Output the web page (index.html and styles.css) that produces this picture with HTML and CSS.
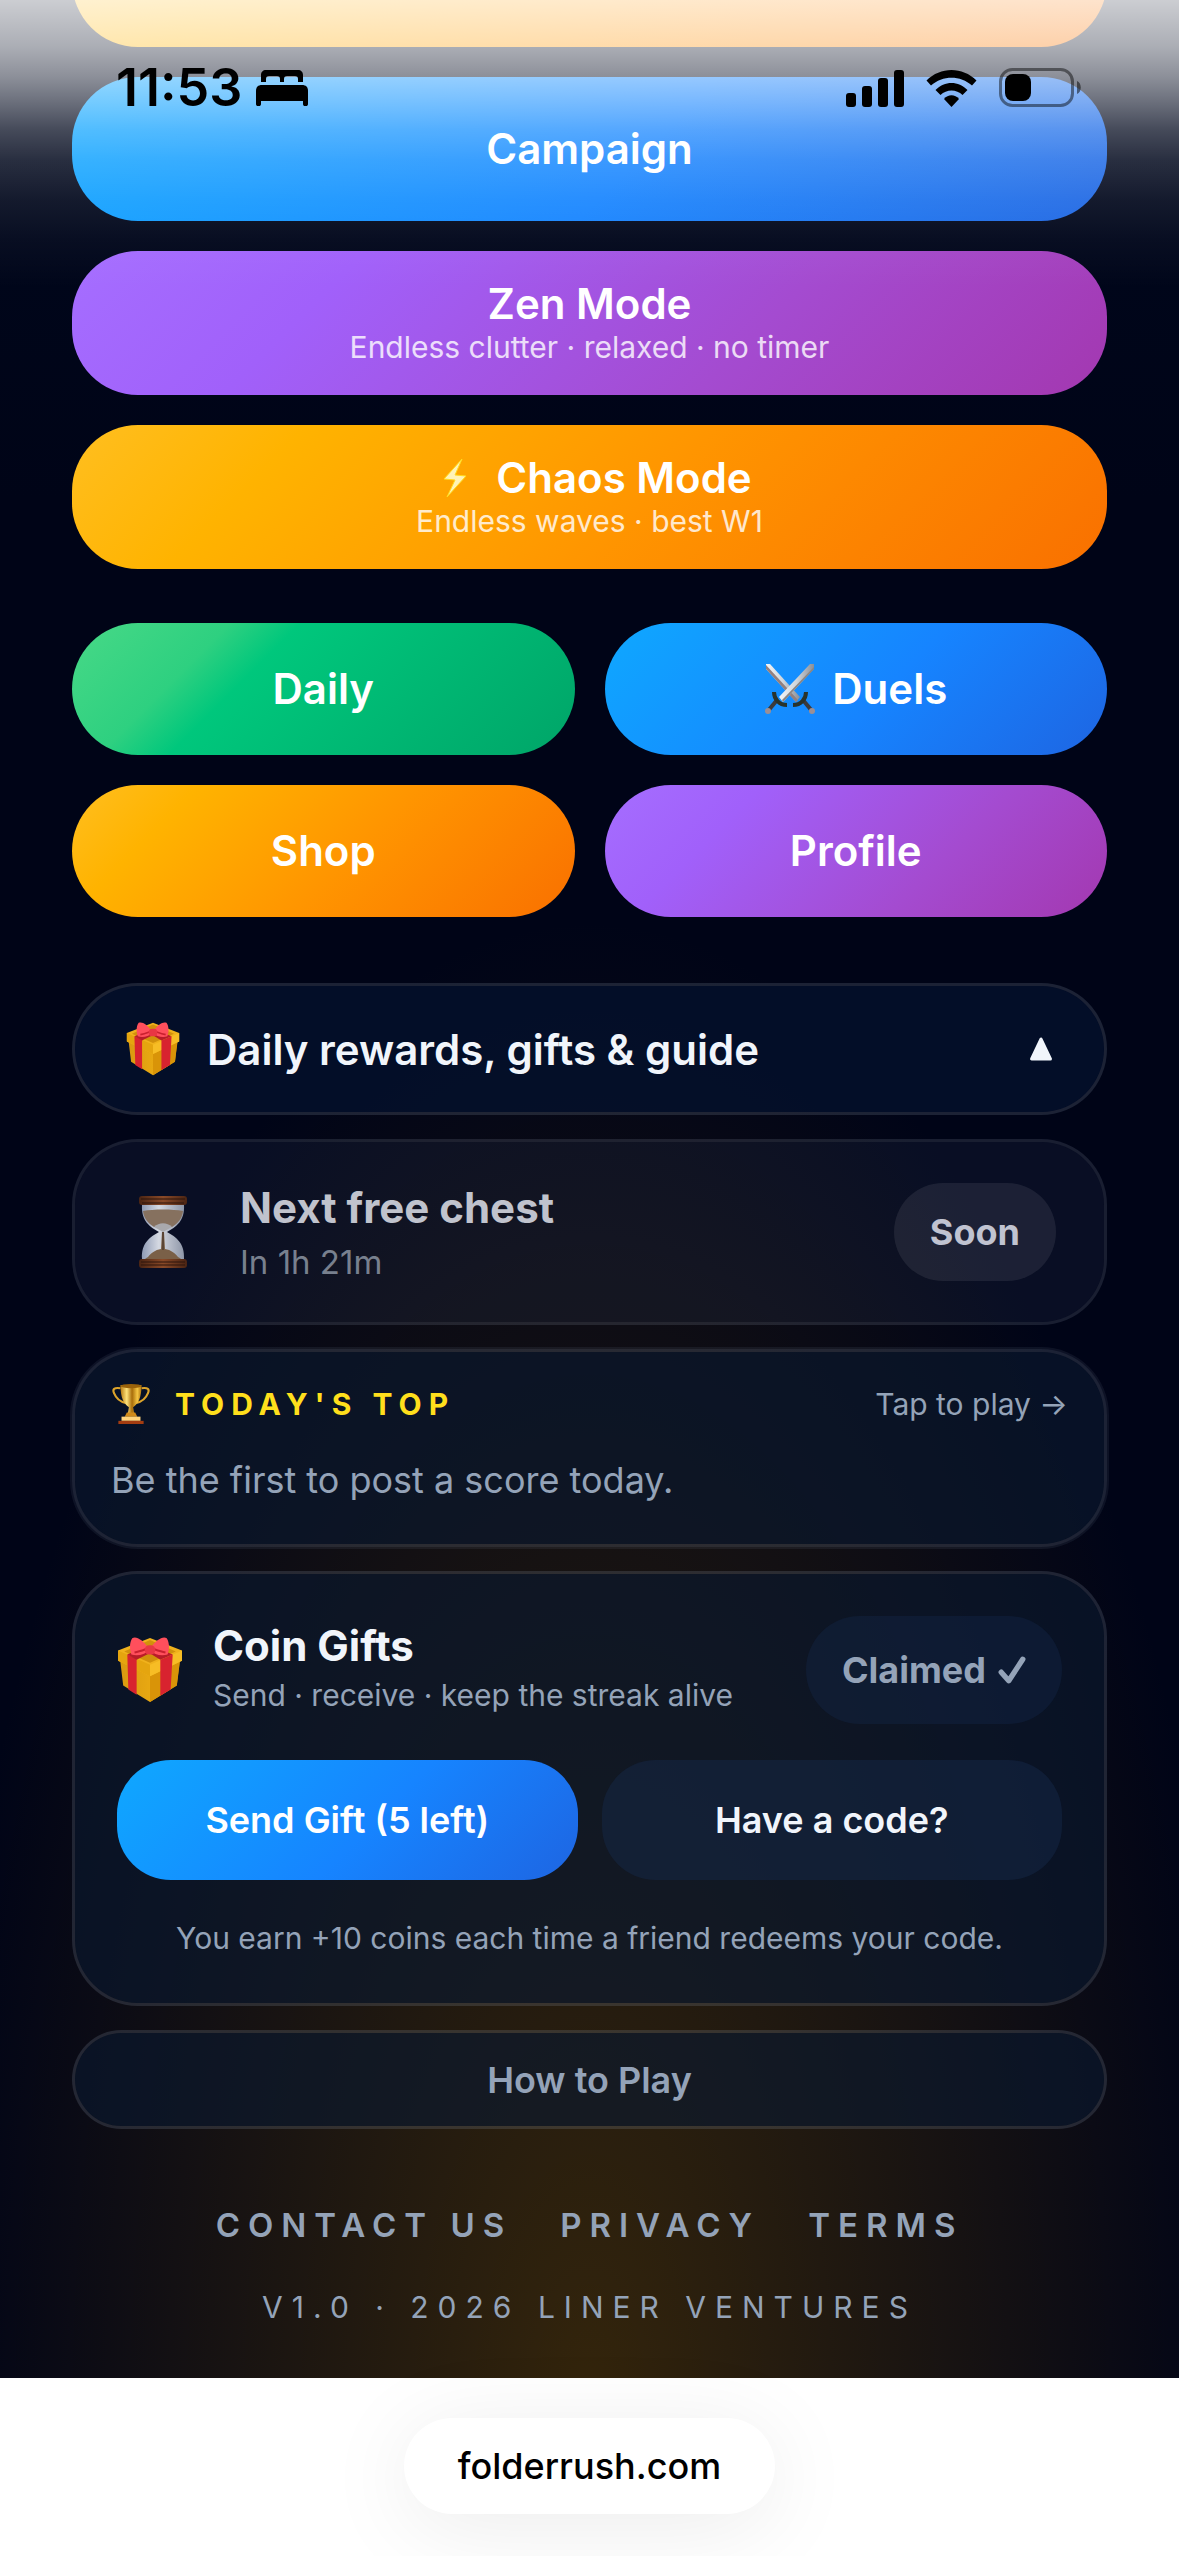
FILE: index.html
```
<!DOCTYPE html>
<html lang="en">
<head>
<meta charset="utf-8">
<meta name="viewport" content="width=device-width, initial-scale=1">
<title>Folder Rush</title>
<link rel="stylesheet" href="styles.css">
</head>
<body>
<svg class="defs" aria-hidden="true">
  <defs>
    <linearGradient id="gold" x1="0" x2="1"><stop offset="0" stop-color="#d99a10"/><stop offset=".5" stop-color="#e8a812"/><stop offset="1" stop-color="#c98a08"/></linearGradient>
    <linearGradient id="cup" x1="0" x2="1"><stop offset="0" stop-color="#b87a10"/><stop offset=".3" stop-color="#ffe27a"/><stop offset=".55" stop-color="#a86c0a"/><stop offset=".8" stop-color="#f5c542"/><stop offset="1" stop-color="#b07510"/></linearGradient>
    <linearGradient id="wood" x1="0" x2="1"><stop offset="0" stop-color="#4a2413"/><stop offset=".5" stop-color="#8a4a28"/><stop offset="1" stop-color="#4a2413"/></linearGradient>
    <linearGradient id="glass" x1="0" x2="1"><stop offset="0" stop-color="#8f9bb5"/><stop offset=".4" stop-color="#d5d9e2"/><stop offset="1" stop-color="#8e96a8"/></linearGradient>
    <linearGradient id="blade" x1="0" x2="1"><stop offset="0" stop-color="#f2f5f8"/><stop offset=".5" stop-color="#cfd6dd"/><stop offset="1" stop-color="#8a8f98"/></linearGradient>
    <symbol id="gift" viewBox="0 0 62 64">
      <path d="M2 22 31 36 60 22 57 47 31 63 5 47z" fill="url(#gold)"/>
      <path d="M31 36v27l26-16 3-23z" fill="#d99408"/>
      <path d="M0 13 31 1 62 13v10L31 38 0 23z" fill="#f0b21c"/>
      <path d="M0 13 31 27v11L0 23z" fill="#e5a50f"/>
      <path d="M62 13 31 27v11l31-15z" fill="#f7bd25"/>
      <path d="M31 3 56 14 31 25 6 14z" fill="#d2900c"/>
      <path d="M9 17l9 4v35l-8-5z" fill="#d8232f"/>
      <path d="M53 17l-12 5v35l10-6z" fill="#d8232f"/>
      <path d="M9 17l16-7 9 4-16 8zM53 17 36 10l-8 4 13 8z" fill="#b81c29"/>
      <path d="M30 11C24 3 18-1 14 1c-3 4-3 11-1 16 6 2 13 0 17-4zM31 11c6-8 12-12 16-10 3 4 3 11 1 16-6 2-13 0-17-4z" fill="#ff4f5c"/>
      <path d="M16 15c5-1 10-3 13-4M46 15c-5-1-10-3-13-4" stroke="#c9202f" stroke-width="2" fill="none"/>
      <rect x="26" y="8" width="10" height="9" rx="4" fill="#e83644"/>
    </symbol>
  </defs>
</svg>

<header class="status">
  <div class="status-side">
    <time class="clock">11:53</time>
    <svg class="bed" viewBox="0 0 52 36" aria-label="Sleep mode"><path d="M5 12V5c0-3 2-5 5-5h32c3 0 5 2 5 5v7h-5V9c0-2-1-3-3-3H31c-2 0-3 1-3 3v3h-4V9c0-2-1-3-3-3H13c-2 0-3 1-3 3v3z"/><path d="M0 21c0-4 2-6 6-6h40c4 0 6 2 6 6v13c0 3-5 3-5 0v-3H5v3c0 3-5 3-5 0z"/></svg>
  </div>
  <div class="status-side status-right">
    <svg class="signal" viewBox="0 0 58 37" aria-label="Signal"><rect y="23" width="10" height="14" rx="3"/><rect x="16" y="16" width="10" height="21" rx="3"/><rect x="32" y="8" width="10" height="29" rx="3"/><rect x="48" width="10" height="37" rx="3"/></svg>
    <svg class="wifi" viewBox="0 0 50 37" aria-label="Wi-Fi"><path d="M0 10.500C14-3.500 36-3.500 50 10.500l-4.500 5C34 5 16 5 4.500 15.500z"/><path d="M9 20c9-9.500 23-9.500 32 0l-5 5c-6-6-16-6-22 0z"/><path d="M17.500 29c4-5 11-5 15 0L25 37z"/></svg>
    <svg class="battery" viewBox="0 0 82 40" aria-label="Battery"><rect x="1.500" y="1.500" width="72" height="36" rx="12" fill="none" stroke="#000" stroke-opacity=".45" stroke-width="3"/><rect x="6" y="6" width="26" height="27" rx="8"/><path d="M78 13c5 2 5 11 0 13z" fill-opacity=".5"/></svg>
  </div>
</header>

<main class="app">
  <nav class="modes" aria-label="Game modes">
    <button class="mode orange" type="button" aria-label="Quick play"></button>
    <button class="mode blue" type="button">Campaign</button>
    <button class="mode purple" type="button">Zen Mode<small>Endless clutter · relaxed · no timer</small></button>
    <button class="mode orange" type="button">
      <span class="with-icon"><svg class="bolt" viewBox="0 0 26 40" aria-hidden="true"><path d="M20 1 2 21l11 1L5 39 24 18l-11-1z" fill="#fff3b8" stroke="#ffdc1f" stroke-width="1"/></svg>Chaos Mode</span>
      <small>Endless waves · best W1</small>
    </button>
  </nav>

  <nav class="tiles" aria-label="Shortcuts">
    <button class="tile green" type="button">Daily</button>
    <button class="tile blue" type="button">
      <svg class="swords" viewBox="0 0 50 50" aria-hidden="true">
        <path d="M12 36 3 47" stroke="#3b3a3c" stroke-width="4"/><path d="M38 36l9 11" stroke="#3b3a3c" stroke-width="4"/>
        <path d="M1 0h4l30 33-4 5L1 5z" fill="url(#blade)"/><path d="M1 1l32 35-2 2L1 5z" fill="#92807f"/>
        <path d="M49 0h-4L14 33l4 5L49 5z" fill="url(#blade)"/><path d="M49 3 17 36l1 2L49 5z" fill="#8a8583"/>
        <path d="M9 28c0 7 5 13 13 13M41 28c0 7-5 13-13 13" stroke="#29332c" stroke-width="4" fill="none"/>
        <circle cx="3" cy="47" r="3" fill="#9b8f95"/><circle cx="47" cy="47" r="3" fill="#9b8f95"/>
      </svg>Duels</button>
    <button class="tile orange" type="button">Shop</button>
    <button class="tile purple" type="button">Profile</button>
  </nav>

  <section class="extras">
    <button class="card rewards" type="button" aria-expanded="true">
      <svg class="gift-small" aria-hidden="true"><use href="#gift"/></svg>
      <span class="grow">Daily rewards, gifts &amp; guide</span>
      <svg class="caret" viewBox="0 0 22 23" aria-hidden="true"><path d="M11 2 2 21h18z" fill="#f1f5fb" stroke="#f1f5fb" stroke-width="3" stroke-linejoin="round"/></svg>
    </button>

    <article class="card chest">
      <svg class="hourglass" viewBox="0 0 48 72" aria-hidden="true">
        <path d="M3 9h42c1 16-8 22-17 27C37 41 46 47 45 63H3c-1-16 8-22 17-27C11 31 2 25 3 9z" fill="url(#glass)"/>
        <path d="M4 15c10-2 30-2 40 0-1 8-5 12-11 16H15C9 27 5 23 4 15z" fill="#86715f"/>
        <path d="M15 31c5-5 13-5 18 0l-9 5z" fill="#a9a9ad"/>
        <path d="M23 36h2l1 17c6 1 10 4 13 8 2 1 3 2 3 2H6c0 0 1-1 3-2 3-4 7-7 13-8z" fill="#7a6048"/>
        <path d="M24 36v18" stroke="#5b4535" stroke-width="2"/>
        <rect y="0" width="48" height="9" rx="3" fill="url(#wood)"/><path d="M2 3h44M3 7h42" stroke="#2d150c"/>
        <rect y="63" width="48" height="9" rx="3" fill="url(#wood)"/><path d="M2 66h44M2 69h44" stroke="#2d150c"/>
      </svg>
      <div class="grow">
        <h2 class="chest-title">Next free chest</h2>
        <p class="chest-time">In 1h 21m</p>
      </div>
      <span class="soon">Soon</span>
    </article>

    <article class="card top">
      <div class="top-head">
        <svg class="trophy" viewBox="0 0 36 38" aria-hidden="true">
          <path d="M8 4C2 3 0 5 2 9c2 5 6 8 11 9M28 4c6-1 8 1 6 5-2 5-6 8-11 9" fill="none" stroke="#dda42b" stroke-width="2"/>
          <path d="M8 1h20c0 12-3 18-8 21l1 6h-6l1-6C11 19 8 13 8 1z" fill="url(#cup)"/>
          <ellipse cx="18" cy="2" rx="10" ry="2" fill="#9a620a"/>
          <path d="M14 27h8l2 4H12z" fill="#d08a1a"/><path d="M9 31h18v4H9z" fill="#ffd37a"/><path d="M6 35h24v3H6z" fill="#a33c10"/>
        </svg>
        <h2 class="top-title">TODAY'S TOP</h2>
        <a class="top-link" href="#play">Tap to play →</a>
      </div>
      <p class="top-text">Be the first to post a score today.</p>
    </article>

    <article class="card coins">
      <div class="coins-head">
        <svg class="gift-large" aria-hidden="true"><use href="#gift"/></svg>
        <div class="grow coins-text">
          <h2 class="coins-title">Coin Gifts</h2>
          <p class="coins-sub">Send · receive · keep the streak alive</p>
        </div>
        <button class="claimed" type="button" disabled>Claimed
          <svg class="check" viewBox="0 0 26 26" aria-hidden="true"><path d="M3 15l7 8L23 3" fill="none" stroke="currentColor" stroke-width="5" stroke-linecap="round" stroke-linejoin="round"/></svg></button>
      </div>
      <div class="coins-actions">
        <button class="action blue" type="button">Send Gift (5 left)</button>
        <button class="action muted" type="button">Have a code?</button>
      </div>
      <p class="coins-note">You earn +10 coins each time a friend redeems your code.</p>
    </article>

    <button class="card howto" type="button">How to Play</button>
  </section>

  <footer class="footer">
    <nav class="links" aria-label="Legal">
      <a href="#contact">CONTACT US</a><a href="#privacy">PRIVACY</a><a href="#terms">TERMS</a>
    </nav>
    <p class="version">V1.0 · 2026 LINER VENTURES</p>
  </footer>
</main>

<div class="toolbar"><button class="address" type="button">folderrush.com</button></div>
</body>
</html>
```
FILE: styles.css
```
* { box-sizing: border-box; margin: 0; }

body {
  min-height: 100vh;
  display: flex;
  flex-direction: column;
  position: relative;
  overflow-x: hidden;
  background: #fff;
  color: #f1f5fb;
  font-family: Inter, "Liberation Sans", sans-serif;
}

button { border: 0; font: inherit; color: inherit; }
a { color: inherit; text-decoration: none; }
h2 { font-size: 42px; font-weight: 700; }
svg { flex: none; display: block; }
.defs { position: absolute; width: 0; height: 0; }
.grow { flex: 1; text-align: left; }

/* Phone status bar, laid over the scrolled page */
.status {
  position: absolute;
  inset: 0 0 auto;
  z-index: 2;
  height: 288px;
  padding: 58px 98px 0 116px;
  display: flex;
  justify-content: space-between;
  align-items: flex-start;
  color: #000;
  pointer-events: none;
}
.status::before {
  content: "";
  position: absolute;
  inset: 0;
  z-index: -1;
  background: linear-gradient(rgba(255,255,255,.8), rgba(255,255,255,.67) 47px, rgba(255,255,255,.55) 77px, rgba(255,255,255,.43) 100px, rgba(255,255,255,.27) 130px, rgba(255,255,255,.16) 160px, rgba(255,255,255,.08) 200px, rgba(255,255,255,.03) 240px, rgba(255,255,255,0));
}
.status-side { height: 60px; display: flex; align-items: center; }
.status-right { gap: 22px; }
.clock { font-size: 52px; font-weight: 600; line-height: 60px; }
.bed { width: 52px; height: 36px; margin-left: 14px; }
.signal { width: 58px; height: 37px; }
.wifi { width: 51px; height: 37px; }
.battery { width: 82px; height: 40px; }

.app {
  padding: 0 72px 53px;
  background:
    radial-gradient(660px 1500px at 50% 2420px, rgba(104,70,0,.5), rgba(104,70,0,0)),
    linear-gradient(#00081e, #000417 500px);
  overflow: hidden;
}

.blue { background: linear-gradient(135deg, #0fa8ff, #1684ff 55%, #1e65e2); }
.purple { background: linear-gradient(135deg, #a56eff, #a160fa 25%, #a44bd0 65%, #a338b0); }
.orange { background: linear-gradient(135deg, #ffbf20, #ffb300 20%, #ff9500 55%, #f97000); }
.green { background: linear-gradient(135deg, #48d987, #2ed080 25%, #00c77c 36%, #00a568); }

/* The page is scrolled, so the first mode sits partly above the window */
.modes { display: grid; gap: 30px; margin-top: -97px; }
.mode, .tile {
  border-radius: 66px;
  font-size: 42px;
  font-weight: 600;
  line-height: 48px;
  color: #fff;
  display: flex;
  align-items: center;
  justify-content: center;
}
.mode { height: 144px; flex-direction: column; }
.mode small { font-size: 30px; font-weight: 400; line-height: 39px; opacity: .8; }
.with-icon { display: flex; align-items: center; gap: 28px; padding-left: 15px; }
.bolt { width: 26px; height: 40px; }

.tiles { display: grid; grid-template-columns: 1fr 1fr; gap: 30px; margin-top: 54px; }
.tile { height: 132px; gap: 16px; }
.swords { width: 52px; height: 50px; }

.extras { display: grid; gap: 24px; margin-top: 66px; }
.card {
  border: 3px solid rgba(148,163,184,.19);
  border-radius: 66px;
  background: rgba(10,24,46,.65);
  background-clip: padding-box;
}

.rewards {
  height: 132px;
  padding: 0 51px;
  display: flex;
  align-items: center;
  gap: 27px;
  background: rgba(4,18,48,.7);
  background-clip: padding-box;
  font-size: 42px;
  font-weight: 600;
}
.gift-small { width: 54px; height: 54px; }
.caret { width: 24px; height: 24px; }

.chest {
  padding: 36px 48px;
  display: flex;
  align-items: center;
  gap: 52px;
  background: rgba(120,140,190,.08);
  background-clip: padding-box;
  border-color: rgba(180,190,210,.14);
}
.hourglass { width: 50px; height: 72px; margin-left: 15px; }
.chest-title { line-height: 60px; color: #c0c3cd; }
.chest-time { font-size: 33px; line-height: 48px; color: #78808e; }
.soon {
  padding: 24px 36px;
  border-radius: 49px;
  background: rgba(255,255,255,.08);
  color: #c0c3d0;
  font-size: 36px;
  font-weight: 700;
  line-height: 50px;
}

.top { padding: 28px 36px 37px; box-shadow: 0 0 0 2px rgba(148,163,184,.09); }
.top-head { display: flex; align-items: center; line-height: 48px; font-size: 30px; }
.trophy { width: 40px; height: 40px; margin-right: 24px; }
.top-title { flex: 1; font-size: 30px; letter-spacing: 7px; color: #ffdf1c; }
.top-link { color: #94a3b8; }
.top-text { margin-top: 25px; font-size: 36px; line-height: 54px; color: #94a3b8; }

.coins { padding: 42px; }
.coins-head { display: flex; align-items: center; gap: 30px; }
.coins-text { padding-bottom: 4px; }
.gift-large { width: 66px; height: 66px; }
.coins-title { line-height: 54px; }
.coins-sub { font-size: 30px; line-height: 44px; color: #94a3b8; }
.claimed {
  height: 108px;
  padding: 0 36px;
  border-radius: 54px;
  background: rgba(22,42,80,.32);
  color: #94a3b8;
  font-size: 36px;
  font-weight: 700;
  display: flex;
  align-items: center;
  gap: 12px;
}
.check { width: 28px; height: 28px; }
.coins-actions { display: grid; grid-template-columns: 1fr 1fr; gap: 24px; margin-top: 36px; }
.action { height: 120px; border-radius: 54px; font-size: 36px; font-weight: 600; }
.action.blue { color: #fff; }
.muted { background: rgba(22,42,76,.45); }
.coins-note { margin-top: 36px; font-size: 30px; line-height: 45px; text-align: center; color: #94a3b8; }

.howto { height: 99px; font-size: 36px; font-weight: 600; color: #94a3b8; }

.footer { margin-top: 78px; text-align: center; line-height: 36px; color: #94a3b8; }
.links { display: flex; justify-content: center; gap: 48px; font-size: 33px; font-weight: 600; letter-spacing: 8px; }
.version { margin-top: 46px; font-size: 30px; letter-spacing: 9px; }

/* Browser toolbar */
.toolbar { flex: 1; min-height: 178px; padding-top: 40px; text-align: center; }
.address {
  height: 96px;
  padding: 0 54px;
  border-radius: 48px;
  background: #fff;
  box-shadow: 0 12px 90px rgba(0,0,0,.08);
  color: #000;
  font-size: 36px;
  font-weight: 500;
}
```
